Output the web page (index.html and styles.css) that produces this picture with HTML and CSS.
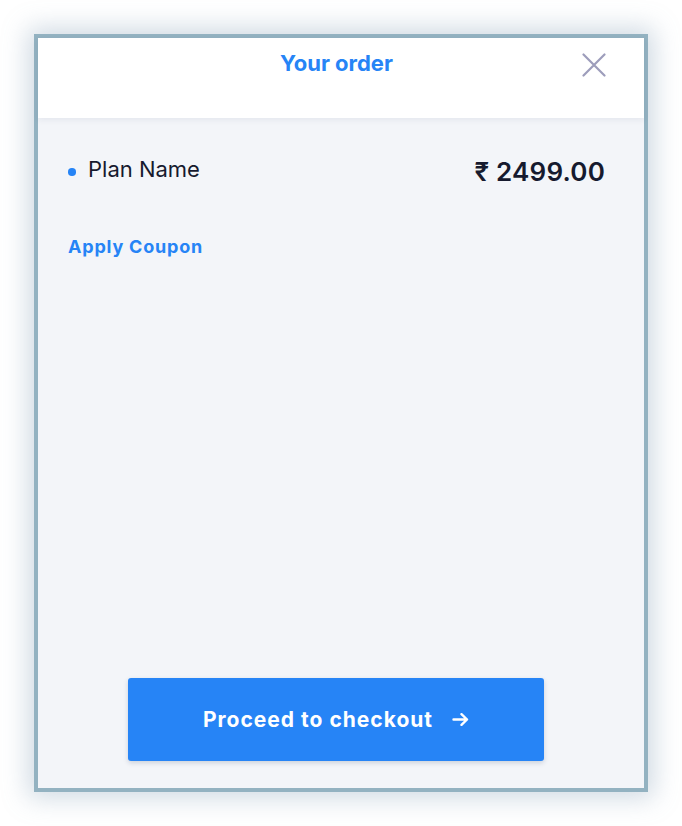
FILE: index.html
```html
<!DOCTYPE html>
<html>
<head>
<meta charset="utf-8">
<link rel="stylesheet" href="styles.css">
</head>
<body>
<div class="modal">
  <header class="modal-header">
    <h1 class="title">Your order</h1>
    <button class="close" aria-label="Close">
      <svg width="24" height="24" viewBox="0 0 24 24"><path d="M1.5 1.5 L22.5 22.5 M22.5 1.5 L1.5 22.5" stroke="#9d9dbb" stroke-width="2.2" stroke-linecap="round" fill="none"/></svg>
    </button>
  </header>
  <main class="modal-body">
    <div class="item">
      <span class="dot"></span>
      <span class="name">Plan Name</span>
      <span class="price">₹ 2499.00</span>
    </div>
    <a class="coupon">Apply Coupon</a>
    <div class="spacer"></div>
    <button class="checkout">Proceed to checkout
      <svg class="arrow" width="17" height="13" viewBox="0 0 17 13"><path d="M1.5 6.5 H15 M9.5 1.2 L15 6.5 L9.5 11.8" stroke="#fff" stroke-width="2.4" stroke-linecap="round" stroke-linejoin="round" fill="none"/></svg>
    </button>
  </main>
</div>
</body>
</html>
```
FILE: styles.css
```css
* { box-sizing: border-box; }
html, body { margin: 0; padding: 0; background: #fff; }
body {
  font-family: Inter, "Noto Sans", sans-serif;
  padding: 34px;
}
.modal {
  width: 614px;
  height: 758px;
  border: 4px solid #93b2c1;
  background: #f3f5f9;
  display: flex;
  flex-direction: column;
  box-shadow: 0 0 24px 6px rgba(120, 150, 175, 0.35);
}
.modal-header {
  height: 80px;
  background: #fff;
  position: relative;
  display: flex;
  justify-content: center;
  padding-right: 9px;
  box-shadow: 0 2px 6px rgba(30, 40, 80, 0.07);
  z-index: 1;
}
.title {
  margin: 0;
  padding-top: 12px;
  font-size: 22px;
  line-height: normal;
  font-weight: 700;
  color: #2684f6;
}
.close {
  position: absolute;
  right: 38px;
  top: 15px;
  padding: 0;
  border: 0;
  background: none;
  width: 24px;
  height: 24px;
}
.close svg { display: block; }
.modal-body {
  flex: 1;
  display: flex;
  flex-direction: column;
  padding: 38px 39px 27px 30px;
}
.item {
  display: flex;
  align-items: flex-start;
}
.dot {
  width: 7.5px;
  height: 7.5px;
  border-radius: 50%;
  background: #2684f6;
  margin-top: 12px;
  margin-right: 12.5px;
}
.name {
  font-size: 22px;
  color: #161a2e;
  flex: 1;
}
.price {
  font-size: 26px;
  font-weight: 600;
  letter-spacing: 0.2px;
  color: #161a2e;
}
.coupon {
  margin-top: 49px;
  font-size: 18px;
  font-weight: 700;
  letter-spacing: 0.8px;
  color: #2684f6;
}
.spacer { flex: 1; }
.checkout {
  margin-left: 60px;
  width: 416px;
  height: 83px;
  border: 0;
  border-radius: 3px;
  background: #2684f6;
  color: #fff;
  font-family: inherit;
  font-size: 21px;
  font-weight: 700;
  letter-spacing: 1px;
  display: flex;
  align-items: center;
  justify-content: center;
  gap: 19px;
  box-shadow: 0 2px 5px rgba(30, 50, 90, 0.18);
}
.arrow { display: block; }
```
